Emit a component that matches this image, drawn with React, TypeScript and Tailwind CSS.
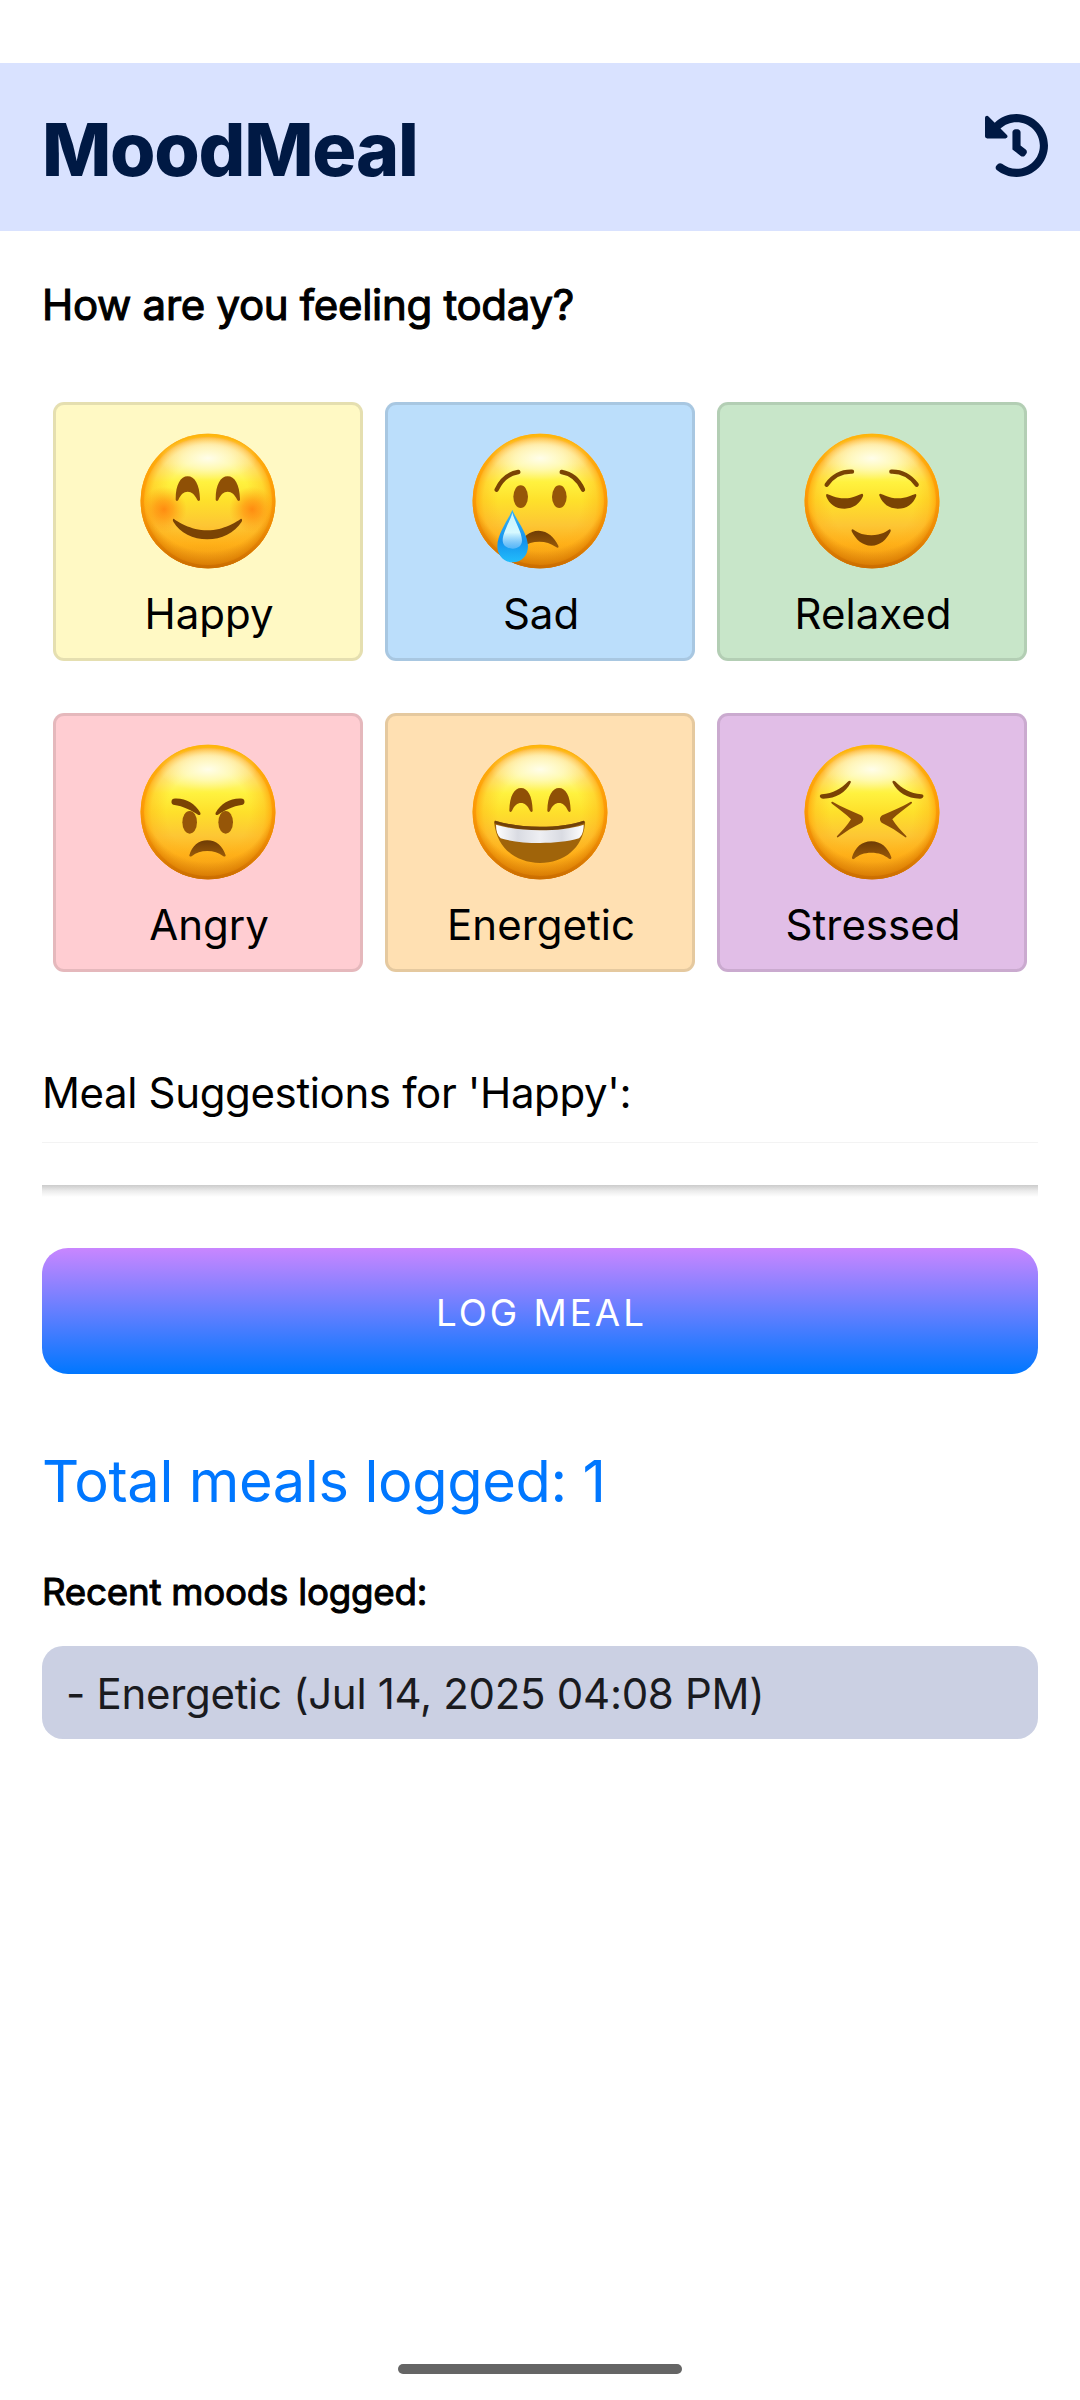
import type { ReactNode } from "react";
import { FaHistory } from "react-icons/fa";

const INK = "#7a4304";

// Shared glossy yellow ball; every face is drawn in a 408-unit square.
function Face({ id, children }: { id: string; children: ReactNode }) {
  return (
    <svg viewBox="0 0 408 408" className="block h-[136px] w-[136px]" aria-hidden="true">
      <defs>
        <linearGradient id={`${id}-base`} x1="0" y1="0" x2="0" y2="1">
          <stop offset="0.03" stopColor="#fffad0" />
          <stop offset="0.09" stopColor="#fffcdf" />
          <stop offset="0.22" stopColor="#fff9a0" />
          <stop offset="0.36" stopColor="#fff23f" />
          <stop offset="0.5" stopColor="#fee02b" />
          <stop offset="0.68" stopColor="#fdc634" />
          <stop offset="0.82" stopColor="#ffb018" />
          <stop offset="0.93" stopColor="#f09a10" />
          <stop offset="1" stopColor="#d67c04" />
        </linearGradient>
        <radialGradient id={`${id}-rim`} cx="0.5" cy="0.5" r="0.5">
          <stop offset="0.62" stopColor="#ffb01c" stopOpacity="0" />
          <stop offset="0.84" stopColor="#ffac18" stopOpacity="0.35" />
          <stop offset="0.93" stopColor="#ffa40c" stopOpacity="0.7" />
          <stop offset="1" stopColor="#f98f04" stopOpacity="1" />
        </radialGradient>
        <linearGradient id={`${id}-edge`} x1="0" y1="0" x2="0" y2="1">
          <stop offset="0" stopColor="#ffbe0a" />
          <stop offset="0.4" stopColor="#ff9c06" />
          <stop offset="0.7" stopColor="#f08c04" />
          <stop offset="1" stopColor="#c96c00" />
        </linearGradient>
        <radialGradient id={`${id}-shine`} cx="0.5" cy="0.5" r="0.5">
          <stop offset="0" stopColor="#fffdea" stopOpacity="1" />
          <stop offset="0.5" stopColor="#fffbc8" stopOpacity="0.65" />
          <stop offset="1" stopColor="#fff8a0" stopOpacity="0" />
        </radialGradient>
        <radialGradient id={`${id}-shade`} cx="0.5" cy="0.38" r="0.63">
          <stop offset="0.78" stopColor="#c96a00" stopOpacity="0" />
          <stop offset="1" stopColor="#c06400" stopOpacity="0.75" />
        </radialGradient>
        <radialGradient id={`${id}-blush`} cx="0.5" cy="0.5" r="0.5">
          <stop offset="0" stopColor="#ff7f0c" stopOpacity="0.85" />
          <stop offset="0.4" stopColor="#ff880e" stopOpacity="0.6" />
          <stop offset="1" stopColor="#ff9a14" stopOpacity="0" />
        </radialGradient>
        <linearGradient id={`${id}-tear`} x1="0" y1="0" x2="0" y2="1">
          <stop offset="0" stopColor="#37b4f5" />
          <stop offset="0.6" stopColor="#1593ee" />
          <stop offset="1" stopColor="#22bdfb" />
        </linearGradient>
        <linearGradient id={`${id}-tearlight`} x1="0" y1="0" x2="0" y2="1">
          <stop offset="0" stopColor="#c8f3ff" />
          <stop offset="0.55" stopColor="#d6f9ff" />
          <stop offset="1" stopColor="#7cc4fb" stopOpacity="0.6" />
        </linearGradient>
        <linearGradient id={`${id}-teeth`} x1="0" y1="0" x2="1" y2="0">
          <stop offset="0" stopColor="#ffffff" />
          <stop offset="0.25" stopColor="#d9dbe2" />
          <stop offset="0.5" stopColor="#eeeff3" />
          <stop offset="0.75" stopColor="#d9dbe2" />
          <stop offset="1" stopColor="#ffffff" />
        </linearGradient>
        <linearGradient id={`${id}-ink`} x1="0" y1="0" x2="0" y2="1">
          <stop offset="0" stopColor="#6f3c05" />
          <stop offset="1" stopColor="#9a5a08" />
        </linearGradient>
      </defs>
      <circle cx="204" cy="204" r="202" fill={`url(#${id}-base)`} />
      <circle cx="204" cy="204" r="202" fill={`url(#${id}-rim)`} />
      <circle cx="204" cy="204" r="202" fill={`url(#${id}-shade)`} />
      <circle cx="204" cy="204" r="197" fill="none" stroke={`url(#${id}-edge)`} strokeWidth="10" opacity="0.75" />
      <ellipse cx="204" cy="76" rx="148" ry="66" fill={`url(#${id}-shine)`} />
      {children}
    </svg>
  );
}

function HappyFace() {
  return (
    <Face id="happy">
      <circle cx="72" cy="229" r="68" fill="url(#happy-blush)" />
      <circle cx="336" cy="229" r="68" fill="url(#happy-blush)" />
      <path d="M107 199C107 154 122 130 143 130s36 24 37 69c0 6-5 7-8 2-8-17-17-25-29-25s-21 8-28 25c-3 5-8 4-8-2z" fill="#8f5006" />
      <path d="M227 199c0-45 15-69 36-69s36 24 37 69c0 6-5 7-8 2-8-17-17-25-29-25s-21 8-28 25c-3 5-8 4-8-2z" fill="#8f5006" />
      <path d="M101 257c9 7 51 35 101 35s91-28 101-35c4 0 4 6 2 9-22 33-60 53-103 53s-82-19-102-53c-2-3-2-9 1-9z" fill={INK} />
    </Face>
  );
}

function SadFace() {
  return (
    <Face id="sad">
      <path d="M74 170c14-30 35-48 65-53" fill="none" stroke={INK} strokeWidth="13" strokeLinecap="round" />
      <path d="M269 117c30 5 51 23 64 53" fill="none" stroke={INK} strokeWidth="13" strokeLinecap="round" />
      <ellipse cx="146" cy="191" rx="22" ry="34" fill="#965608" />
      <ellipse cx="262" cy="191" rx="22" ry="34" fill="#965608" />
      <path d="M143 338c8-28 29-44 57-45 28 1 47 20 59 45 2 6-2 8-7 4-16-11-31-16-50-16s-36 5-50 16c-6 4-11 3-9-4z" fill="url(#sad-ink)" />
      <path d="M121 230c9 26 47 70 47 109 0 29-20 49-46 49s-46-20-46-49c0-38 36-83 45-109z" fill="url(#sad-tear)" />
      <path d="M121 239c5 22 29 58 29 83 0 16-11 25-28 25s-30-9-30-25c0-24 24-61 29-83z" fill="url(#sad-tearlight)" />
    </Face>
  );
}

function RelaxedFace() {
  return (
    <Face id="relaxed">
      <path d="M68 155c18-25 42-40 76-39" fill="none" stroke={INK} strokeWidth="13" strokeLinecap="round" />
      <path d="M262 116c34-1 58 15 76 39" fill="none" stroke={INK} strokeWidth="13" strokeLinecap="round" />
      <path d="M69 183c10 2 25 13 53 13s42-12 52-14c4 0 4 5 3 8-10 22-28 37-55 37s-46-14-55-36c-1-4-1-8 2-8z" fill={INK} />
      <path d="M229 182c10 2 25 14 52 14s43-11 53-13c3 0 4 4 2 8-9 22-28 36-55 36s-45-15-54-37c-2-3-2-8 2-8z" fill={INK} />
      <path d="M146 289c10 6 25 18 56 18s46-13 55-18c4 0 4 5 2 8-12 23-30 41-57 41s-46-18-58-41c-2-3-2-8 2-8z" fill={INK} />
    </Face>
  );
}

function AngryFace() {
  return (
    <Face id="angry">
      <path d="M101 164c35-3 63 14 80 42 2 5-2 9-7 6-21-14-42-25-74-30-8-2-7-17 1-18z" fill={INK} />
      <path d="M307 164c-35-3-63 14-80 42-2 5 2 9 7 6 21-14 42-25 74-30 8-2 7-17-1-18z" fill={INK} />
      <ellipse cx="149" cy="235" rx="22" ry="34" fill="#965608" />
      <ellipse cx="257" cy="235" rx="22" ry="34" fill="#965608" />
      <path d="M148 334c8-28 27-45 54-45s46 17 55 45c0 4-4 5-8 2-14-10-28-15-47-15s-33 5-46 15c-4 3-8 2-8-2z" fill="url(#angry-ink)" />
    </Face>
  );
}

function EnergeticFace() {
  return (
    <Face id="energetic">
      <path d="M112 199c1-44 15-67 35-67s34 23 35 67c0 6-5 6-8 1-7-15-16-23-27-23s-20 8-27 23c-3 5-8 5-8-1z" fill="#8f5006" />
      <path d="M226 199c1-44 15-67 35-67s34 23 35 67c0 6-5 6-8 1-7-15-16-23-27-23s-20 8-27 23c-3 5-8 5-8-1z" fill="#8f5006" />
      <path d="M70 230c42 12 82 18 134 18s93-6 131-18c4 0 5 4 4 10-7 72-63 117-135 117S76 312 67 240c-1-6-1-10 3-10z" fill="#a0640a" />
      <path d="M69 230c43 12 83 18 135 18s93-6 131-18l3 7c-42 16-82 22-134 22S111 252 68 238z" fill="#70400a" />
      <path d="M72 242c42 12 80 17 132 17s92-5 131-17c0 20-5 33-14 41-35 10-73 14-117 14S120 293 86 283c-9-8-14-22-14-41z" fill="url(#energetic-teeth)" />
    </Face>
  );
}

function StressedFace() {
  return (
    <Face id="stressed">
      <path d="M54 151c34-3 56-16 79-39 5-4 9-1 7 4-15 29-43 47-82 48-12 0-14-12-4-13z" fill={INK} />
      <path d="M352 151c-34-3-56-16-79-39-5-4-9-1-7 4 15 29 43 47 82 48 12 0 14-12 4-13z" fill={INK} />
      <path d="M87 174c24 14 54 27 84 40 9 6 9 15 2 22-25 12-48 26-71 44-3 1-5-2-2-5 14-14 30-30 41-49-14-15-36-31-57-47-4-3-2-7 3-5z" fill="#8b4e06" />
      <path d="M319 174c-24 14-54 27-84 40-9 6-9 15-2 22 25 12 48 26 71 44 3 1 5-2 2-5-14-14-30-30-41-49 14-15 36-31 57-47 4-3 2-7-3-5z" fill="#8b4e06" />
      <path d="M144 340c9-29 29-48 58-48s50 19 60 48c1 5-3 7-7 4-15-12-31-18-53-18s-37 6-51 18c-4 3-8 1-7-4z" fill="url(#stressed-ink)" />
    </Face>
  );
}

const moods = [
  { label: "Happy", color: "bg-[#fff9c4]", face: <HappyFace /> },
  { label: "Sad", color: "bg-[#bbdefb]", face: <SadFace /> },
  { label: "Relaxed", color: "bg-[#c8e6c9]", face: <RelaxedFace /> },
  { label: "Angry", color: "bg-[#ffcdd2]", face: <AngryFace /> },
  { label: "Energetic", color: "bg-[#ffe0b2]", face: <EnergeticFace /> },
  { label: "Stressed", color: "bg-[#e1bee7]", face: <StressedFace /> },
];

export default function App() {
  return (
    <div className="flex h-[2400px] w-[1080px] flex-col bg-white pt-[63px] font-['Inter',sans-serif] text-black">
      <header className="flex h-[168px] shrink-0 items-center justify-between bg-[#d9e2ff] pr-[31px] pl-[42px] text-[#001944]">
        <h1 className="pt-[5px] text-[73.5px] leading-[88px] font-extrabold tracking-[-1.25px]">MoodMeal</h1>
        <button aria-label="History" className="mb-[3px]">
          <FaHistory className="h-[65px] w-[65px]" />
        </button>
      </header>

      <main className="flex flex-1 flex-col px-[42px] pt-[42px]">
        <h2 className="text-[42px] leading-[63px] font-normal tracking-[-0.3px] [-webkit-text-stroke:1.1px_#000]">How are you feeling today?</h2>

        <div className="mt-[66px] grid grid-cols-3 gap-x-[22px] gap-y-[52px] px-[11px]">
          {moods.map((m) => (
            <button
              key={m.label}
              className={`flex h-[259px] flex-col items-center rounded-[11px] border-3 border-black/10 pt-[28px] ${m.color}`}
            >
              {m.face}
              <span className="mt-[13px] pl-[2px] text-[42px] leading-[63px]">{m.label}</span>
            </button>
          ))}
        </div>

        <p className="mt-[89px] text-[42px] leading-[63px] tracking-[-0.36px]">Meal Suggestions for 'Happy':</p>
        <div className="mt-[18px] h-[43px] border-t border-[#f3f3f3]" />
        <div className="h-[12px] bg-linear-to-b from-[#cbcbcb] via-[#ececec] to-white" />

        <button className="mt-[51px] h-[126px] rounded-[26px] bg-linear-to-b/srgb from-[#c986ff] to-[#0077ff] pt-[4px] pl-[3px] text-[36.75px] tracking-[3px] text-white">
          LOG MEAL
        </button>

        <p className="mt-[70px] text-[57.75px] leading-[74px] tracking-[-0.4px] text-[#0077ff]">Total meals logged: 1</p>

        <h3 className="mt-[48px] text-[36.75px] leading-[52px] font-normal tracking-[-0.25px] [-webkit-text-stroke:1px_#000]">Recent moods logged:</h3>
        <div className="mt-[28px] flex h-[93px] items-center rounded-[21px] bg-[#cbd0e3] px-[24px] pt-[2px]">
          <span className="text-[42px] leading-[63px] tracking-[-0.3px] text-[#1a1b1f]">- Energetic (Jul 14, 2025 04:08 PM)</span>
        </div>
      </main>

      <div className="mb-[26px] h-[10px] w-[284px] self-center rounded-full bg-[#656565]" />
    </div>
  );
}
